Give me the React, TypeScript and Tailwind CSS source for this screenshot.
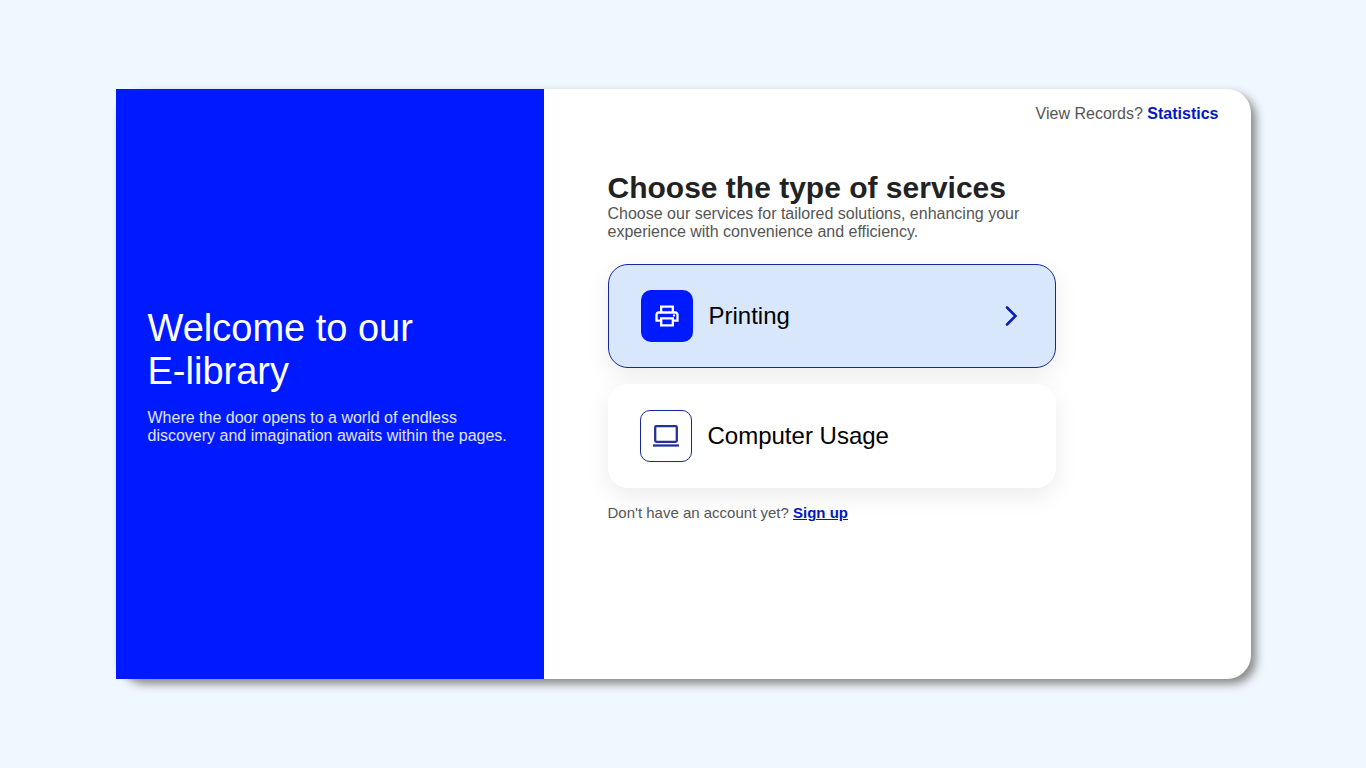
import { MdOutlinePrint } from "react-icons/md";

function LaptopIcon() {
  return (
    <svg viewBox="0 0 28 28" className="size-7" fill="none" stroke="#25309f" strokeWidth="2.3" aria-hidden="true">
      <rect x="3.2" y="4.2" width="21.6" height="15.6" rx="1" />
      <path d="M1 23.5h26" />
    </svg>
  );
}

function ChevronIcon() {
  return (
    <svg
      viewBox="0 0 24 24"
      className="size-6"
      fill="none"
      stroke="#0a1fb8"
      strokeWidth="2.6"
      strokeLinecap="round"
      aria-hidden="true"
    >
      <path d="M8 3.5l8.5 8.5L8 20.5" />
    </svg>
  );
}

export default function App() {
  return (
    <div className="flex min-h-screen items-center justify-center bg-[#f0f8ff] px-4 font-['Liberation_Sans',Arial,sans-serif]">
      <main className="grid min-h-[590px] w-full max-w-[1135px] grid-cols-[428px_1fr] rounded-3xl bg-white shadow-[5px_5px_10px_#888888]">
        <section className="flex flex-col justify-center gap-4 bg-[#001aff] px-8 pb-4">
          <h1 className="text-[38px] leading-[43px] text-white">
            Welcome to our
            <br />
            E-library
          </h1>
          <p className="text-base leading-[18px] text-[#e0e4ff]">
            Where the door opens to a world of endless discovery and imagination awaits within the pages.
          </p>
        </section>

        <section className="flex flex-col px-8 pt-4">
          <p className="self-end text-base leading-[18px] text-[#555555]">
            View Records?{" "}
            <a href="#statistics" className="font-bold text-[#0019c0]">
              Statistics
            </a>
          </p>

          <div className="mt-12 ml-8 w-full max-w-[448px]">
            <h2 className="text-3xl leading-[34px] font-bold text-[#222222]">Choose the type of services</h2>
            <p className="text-base leading-[18px] text-[#555555]">
              Choose our services for tailored solutions, enhancing your experience with convenience and efficiency.
            </p>

            <div className="mt-[23px] flex flex-col gap-4">
              <button
                type="button"
                className="flex h-[104px] items-center gap-4 rounded-[20px] border border-[#16269f] bg-[#d9e7fd] px-8 text-left text-2xl text-black shadow-[0_8px_24px_rgba(0,0,0,0.08)]"
              >
                <span className="grid size-[52px] place-items-center rounded-[10px] bg-[#001aff] text-white">
                  <MdOutlinePrint className="size-7" aria-hidden="true" />
                </span>
                <span className="flex-1">Printing</span>
                <ChevronIcon />
              </button>
              <button
                type="button"
                className="flex h-[104px] items-center gap-4 rounded-[20px] bg-white px-8 text-left text-2xl text-black shadow-[0_8px_24px_rgba(0,0,0,0.08)]"
              >
                <span className="grid size-[52px] place-items-center rounded-[10px] border border-[#16269f]">
                  <LaptopIcon />
                </span>
                <span className="flex-1">Computer Usage</span>
              </button>
            </div>

            <p className="mt-4 text-[15px] leading-[18px] text-[#555555]">
              Don't have an account yet?{" "}
              <a href="#signup" className="font-bold text-[#0019c0] underline">
                Sign up
              </a>
            </p>
          </div>
        </section>
      </main>
    </div>
  );
}
